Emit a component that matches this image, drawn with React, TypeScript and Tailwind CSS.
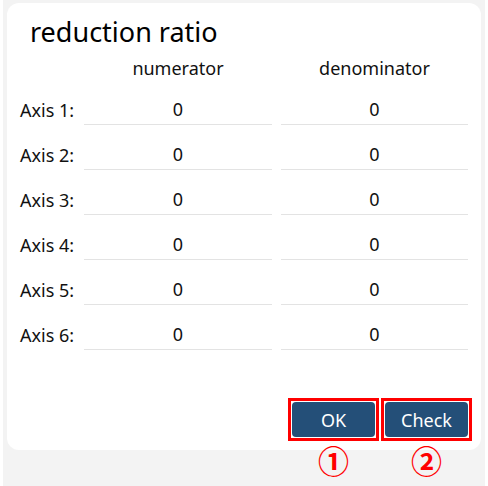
const axes = [1, 2, 3, 4, 5, 6];

function RatioField({ value }: { value: string }) {
  return (
    <div className="h-[36px] border-b border-[#e3e3e3] flex items-end justify-center pb-[5px] leading-[20px]">
      {value}
    </div>
  );
}

function MarkedButton({ label }: { label: string }) {
  return (
    <div className="w-[91px] h-[43px] border-[3px] border-[#f00] p-px">
      <button className="w-full h-full rounded-[4px] bg-[#244f78] text-white text-[18px] leading-none">
        {label}
      </button>
    </div>
  );
}

export default function App() {
  return (
    <div className="w-[488px] h-[486px] bg-white px-[3px] font-['Noto_Sans',sans-serif] text-[#111] text-[18px]">
      <div className="h-full bg-[#f3f3f3] pt-[3px] px-[4px]">
        <div className="h-[447px] bg-white rounded-[12px] pt-[13px] px-[13px] pb-[9px] flex flex-col">
          <h1 className="pl-[10px] text-[27px] leading-[32px] text-black">reduction ratio</h1>

          <div className="grid grid-cols-[55px_188px_187px] gap-x-[9px] mt-[10px]">
            <div />
            <div className="text-center leading-[20px]">numerator</div>
            <div className="text-center leading-[20px]">denominator</div>
          </div>

          <div className="grid grid-cols-[55px_188px_187px] gap-x-[9px] gap-y-[9px] mt-[11px]">
            {axes.map((n) => (
              <div key={n} className="contents">
                <div className="h-[36px] flex items-end pb-[5px] leading-[20px] whitespace-nowrap">Axis {n}:</div>
                <RatioField value="0" />
                <RatioField value="0" />
              </div>
            ))}
          </div>

          <div className="mt-auto flex justify-end gap-[2px] mr-[-4px]">
            <MarkedButton label="OK" />
            <MarkedButton label="Check" />
          </div>
        </div>

        {/* step markers under the buttons */}
        <div className="-mt-[6px] flex justify-end gap-[2px] pr-[9px] text-[#f00] font-['Noto_Sans_CJK_SC',sans-serif] text-[31px] font-bold leading-[31px]">
          <div className="w-[91px] text-center">①</div>
          <div className="w-[91px] text-center">②</div>
        </div>
      </div>
    </div>
  );
}
